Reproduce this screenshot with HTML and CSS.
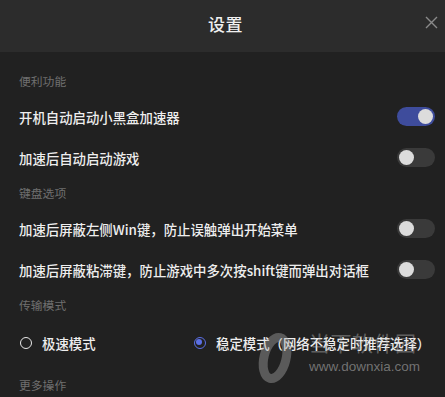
FILE: index.html
```html
<!DOCTYPE html>
<html lang="zh-CN">
<head>
<meta charset="utf-8">
<title>设置</title>
<link rel="stylesheet" href="styles.css">
</head>
<body>
<div class="dialog">
  <header class="header">
    <h1 class="title">设置</h1>
    <button class="close" aria-label="关闭">
      <svg width="13" height="13" viewBox="0 0 13 13"><path d="M1 1L12 12M12 1L1 12" stroke="#8a8a8a" stroke-width="1.4" fill="none"/></svg>
    </button>
  </header>
  <main class="content">
    <div class="section-label first">便利功能</div>
    <div class="row"><span class="row-text">开机自动启动小黑盒加速器</span><span class="switch on"><span class="knob"></span></span></div>
    <div class="row"><span class="row-text">加速后自动启动游戏</span><span class="switch"><span class="knob"></span></span></div>
    <div class="section-label">键盘选项</div>
    <div class="row"><span class="row-text">加速后屏蔽左侧Win键，防止误触弹出开始菜单</span><span class="switch"><span class="knob"></span></span></div>
    <div class="row"><span class="row-text">加速后屏蔽粘滞键，防止游戏中多次按shift键而弹出对话框</span><span class="switch"><span class="knob"></span></span></div>
    <div class="section-label">传输模式</div>
    <div class="radio-row">
      <label class="radio"><span class="radio-dot"></span><span class="row-text">极速模式</span></label>
      <label class="radio checked"><span class="radio-dot"></span><span class="row-text">稳定模式（网络不稳定时推荐选择）</span></label>
    </div>
    <div class="section-label more">更多操作</div>
  </main>
  <div class="watermark">
    <svg class="wm-logo" width="36" height="56" viewBox="0 0 36 56"><ellipse cx="18" cy="28" rx="11" ry="21" transform="rotate(14 18 28)" fill="none" stroke="rgba(170,170,170,0.42)" stroke-width="9"/></svg>
    <div class="wm-text">
      <div class="wm-name">当下软件园</div>
      <div class="wm-url">www.downxia.com</div>
    </div>
  </div>
</div>
</body>
</html>
```
FILE: styles.css
```css
* { box-sizing: border-box; }
html, body { margin: 0; padding: 0; background: #212121; }
body {
  font-family: "Noto Sans CJK SC", "Noto Sans", sans-serif;
  color: #ececec;
  width: 445px;
  height: 397px;
  overflow: hidden;
}
.dialog { position: relative; width: 445px; height: 397px; background: #212121; }
.header {
  height: 52px;
  background: #2c2c2c;
  display: flex;
  align-items: center;
  justify-content: center;
  position: relative;
}
.title {
  margin: 0 0 5px 6px;
  font-size: 17px;
  font-weight: 500;
  color: #f0f0f0;
  letter-spacing: 0.5px;
}
.close {
  position: absolute;
  right: 7px;
  top: 16px;
  background: none;
  border: 0;
  padding: 0;
  width: 13px;
  height: 13px;
  display: flex;
}
.content { padding: 14px 10px 0 19px; }
.section-label {
  height: 30px;
  line-height: 30px;
  font-size: 11.8px;
  color: #6f6f6f;
}
.section-label.more { margin-top: 4px; }
.row {
  height: 41px;
  display: flex;
  align-items: center;
  justify-content: space-between;
}
.row-text {
  font-size: 13.4px;
  font-weight: 500;
  color: #eeeeee;
  letter-spacing: 0;
}
.switch {
  width: 38px;
  height: 19px;
  border-radius: 10px;
  background: #3a3a3a;
  position: relative;
  flex: none;
}
.switch .knob {
  position: absolute;
  top: 2px;
  left: 2px;
  width: 15px;
  height: 15px;
  border-radius: 50%;
  background: #dcdcdc;
}
.switch.on { background: #3e4c9c; }
.switch.on .knob { left: 21px; }
.radio-row {
  height: 46px;
  display: flex;
  align-items: center;
}
.radio { display: flex; align-items: center; gap: 10px; }
.radio:first-child { width: 175px; padding-left: 1px; }
.radio-dot {
  width: 12px;
  height: 12px;
  border-radius: 50%;
  border: 1.8px solid #e8e8e8;
  flex: none;
  position: relative;
}
.radio.checked .radio-dot { border-color: #5b6fe6; }
.radio.checked .radio-dot::after {
  content: "";
  position: absolute;
  left: 1.2px;
  top: 1.2px;
  width: 6px;
  height: 6px;
  border-radius: 50%;
  background: #5b6fe6;
}
.watermark {
  position: absolute;
  left: 257px;
  top: 330px;
  display: flex;
  align-items: flex-start;
  gap: 16px;
  pointer-events: none;
}
.wm-text { display: flex; flex-direction: column; }
.wm-name {
  font-size: 21px;
  line-height: 24px;
  color: rgba(200, 200, 200, 0.4);
  letter-spacing: 0.5px;
}
.wm-url {
  font-family: "Liberation Sans", Arial, sans-serif;
  font-size: 13.5px;
  line-height: 16px;
  margin-top: 5px;
  color: rgba(160, 160, 160, 0.65);
}
```
